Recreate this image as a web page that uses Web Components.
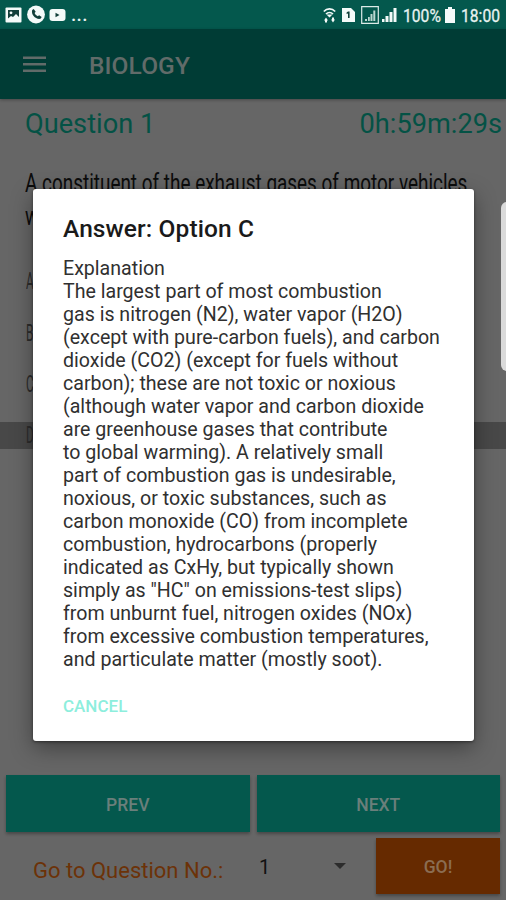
<!DOCTYPE html>
<html lang="en">
<head>
<meta charset="UTF-8">
<meta name="viewport" content="width=device-width, initial-scale=1.0">
<title>Biology Quiz</title>
<style>
  html, body { margin: 0; height: 100%; overflow: hidden; }
  body { font-family: Roboto, "Liberation Sans", sans-serif; background: #666; }
</style>
</head>
<body>
<quiz-app></quiz-app>

<script>
class StatusBar extends HTMLElement {
  connectedCallback() {
    this.attachShadow({ mode: 'open' });
    this.shadowRoot.innerHTML = `
      <style>
        :host {
          display: flex;
          justify-content: space-between;
          align-items: center;
          box-sizing: border-box;
          height: 29px;
          padding: 0 7px 0 5px;
          background: #04584d;
          color: #e9f3f1;
          font-size: 18px;
        }
        .group { display: flex; align-items: center; }
        svg { display: block; flex: none; fill: #f4faf9; }
        .dots { font-size: 19px; line-height: 20px; letter-spacing: 0.3px; margin-left: 5px; font-weight: 500; }
        .text { display: block; white-space: nowrap; line-height: 20px; padding-top: 2px; transform-origin: 0 50%; transform: scaleX(0.87); -webkit-text-stroke: 0.3px; }
      </style>
      <div class="group">
        <svg width="17" height="18" viewBox="0 0 17 18"><rect x=".5" y="1.500" width="16" height="15" rx="1"/><path fill="#123f3a" d="M3 4h11v7l-3-3-3 3-2-1-3 2.500z"/><circle cx="6" cy="6.800" r="1.400"/></svg>
        <svg width="18" height="19" viewBox="0 0 18 19" style="margin-left:5px"><circle cx="9" cy="9.500" r="8.900"/><path fill="#123f3a" d="M5.200 5l1.500-1 2 2.800-1.100 1.300c.6 1.500 1.700 2.500 3.200 3.200l1.300-1.100 2.600 1.900-1.200 1.700C8.700 14.800 3.800 9.500 5.200 5z"/></svg>
        <svg width="17" height="14" viewBox="0 0 17 14" style="margin-left:4px"><rect x=".5" y="1" width="16" height="12" rx="3"/><path fill="#123f3a" d="M6.500 4.800v4.400l4-2.200z"/></svg>
        <span class="dots">...</span>
      </div>
      <div class="group">
        <svg width="13" height="18" viewBox="0 0 13 18"><g fill="none" stroke="#f4faf9" stroke-width="1.700"><path d="M.8 5.500C4 2 9 2 12.200 5.500M3 8c2-2 5-2 7 0"/></g><path d="M6.500 11.500L3.500 8.500h6zM3 11.500l2 3H4v2H2v-2H1zM10 16.500l-2-3h1v-2h2v2h1z"/></svg>
        <svg width="13" height="16" viewBox="0 0 13 16" style="margin-left:6px"><path d="M0 1h9l4 4v10H0z"/><path fill="#123f3a" d="M6 4.500h1.600V11H6V6.500l-1.400.6V5.600z"/></svg>
        <svg width="18" height="18" viewBox="0 0 18 18" style="margin-left:6px"><path fill="none" stroke="#dcebe8" stroke-width="1.200" d="M.7.700h16.600v16.600H.7z"/><path fill="#bcd6d1" d="M4 13h2v2H4zM7 11h1.800v4H7zM9.500 8h2v7h-2zM12.300 4.500h2V15h-2z"/></svg>
        <svg width="15" height="16" viewBox="0 0 15 16" style="margin-left:3px"><path d="M0 12h2.500v3H0zM3.500 9H6.500v6H3.500zM7.500 5h3v10h-3zM11.500 1h3v14h-3z"/></svg>
        <span class="text" style="margin-left:6px;width:38px">100%</span>
        <svg width="10" height="16" viewBox="0 0 10 16" style="margin-left:4px"><path d="M3 0h4v2h3v14H0V2h3z"/></svg>
        <span class="text" style="margin-left:6px;width:38px">18:00</span>
      </div>
    `;
  }
}

class AppToolbar extends HTMLElement {
  connectedCallback() {
    this.attachShadow({ mode: 'open' });
    this.shadowRoot.innerHTML = `
      <style>
        :host {
          display: flex;
          align-items: center;
          box-sizing: border-box;
          height: 70px;
          padding: 2px 23px 0;
          gap: 43px;
          background: #003c35;
          color: #616b69;
          font-size: 24.500px;
          letter-spacing: 0.1px;
          font-weight: 500;
          box-shadow: 0 1px 3px rgba(0,0,0,0.3);
        }
        svg { display: block; }
      </style>
      <svg width="23" height="18" viewBox="0 0 23 18" fill="#616b69"><path d="M0 .5h23v2.600H0zM0 7h23v2.600H0zM0 13.500h23v2.600H0z"/></svg>
      <slot></slot>
    `;
  }
}

class QuizQuestion extends HTMLElement {
  connectedCallback() {
    this.attachShadow({ mode: 'open' });
    this.shadowRoot.innerHTML = `
      <style>
        :host { display: block; }
        .head {
          display: flex;
          justify-content: space-between;
          padding: 9px 4px 0 25px;
          font-size: 27.200px;
          line-height: 33px;
          color: #045245;
        }
        .narrow {
          display: block;
          transform: scaleX(0.757);
          transform-origin: 0 0;
          white-space: nowrap;
          color: #0c0c0c;
        }
        .question {
          margin: 26px 0 0 25px;
          font-size: 25px;
          line-height: 33px;
          width: 700px;
        }
        .options { margin-top: 23px; }
        .option {
          box-sizing: border-box;
          height: 51.500px;
          padding: 12px 0 0 26px;
          font-size: 24px;
          line-height: 27px;
        }
        .option .narrow { color: #2c2c2c; transform: scaleX(0.5); }
        .option.last { height: 27px; margin-top: 11px; padding-top: 0; background: #484848; }
      </style>
      <div class="head"><slot name="number"></slot><slot name="timer"></slot></div>
      <div class="narrow question"><slot></slot></div>
      <div class="options">
        <div class="option"><span class="narrow">A</span></div>
        <div class="option"><span class="narrow">B</span></div>
        <div class="option"><span class="narrow">C</span></div>
        <div class="option last"><span class="narrow">D</span></div>
      </div>
    `;
  }
}

class QuizButton extends HTMLElement {
  connectedCallback() {
    this.attachShadow({ mode: 'open' });
    this.shadowRoot.innerHTML = `
      <style>
        :host {
          display: flex;
          align-items: center;
          justify-content: center;
          box-sizing: border-box;
          height: 57px;
          padding-top: 2px;
          background: var(--fill, #04584d);
          color: var(--ink, #6a7f7b);
          font-size: 17.500px;
          font-weight: 500;
          box-shadow: 0 2px 3px rgba(0,0,0,0.3);
          cursor: pointer;
        }
      </style>
      <slot></slot>
    `;
  }
}

class QuizFooter extends HTMLElement {
  connectedCallback() {
    this.attachShadow({ mode: 'open' });
    this.shadowRoot.innerHTML = `
      <style>
        :host { display: flex; flex-direction: column; gap: 6px; padding: 0 6px 6px; }
        .nav { display: flex; gap: 7px; }
        .nav quiz-button { flex: 1; }
        .jump { display: flex; height: 56px; }
        .label { box-sizing: border-box; width: 253px; padding-left: 27px; font-size: 22px; line-height: 66px; color: #6c3208; white-space: nowrap; }
        .select { display: flex; align-items: center; justify-content: space-between; width: 87px; padding-right: 30px; font-size: 20px; color: #111; }
        .select span { padding-top: 2px; }
        .go { flex: 1; height: 56px; --fill: #662a00; --ink: #8b6d52; }
      </style>
      <div class="nav">
        <quiz-button>PREV</quiz-button>
        <quiz-button>NEXT</quiz-button>
      </div>
      <div class="jump">
        <div class="label">Go to Question No.:</div>
        <div class="select"><span>1</span><svg width="12" height="6" viewBox="0 0 12 6" fill="#2c2c2c"><path d="M0 0h12L6 6z"/></svg></div>
        <quiz-button class="go">GO!</quiz-button>
      </div>
    `;
  }
}

class AnswerDialog extends HTMLElement {
  connectedCallback() {
    this.attachShadow({ mode: 'open' });
    this.shadowRoot.innerHTML = `
      <style>
        :host {
          display: block;
          position: absolute;
          left: 33px; top: 189px;
          width: 441px; height: 552px;
          box-sizing: border-box;
          padding: 24px 0 0 30px;
          background: #fff;
          border-radius: 3px;
          box-shadow: 0 7px 22px rgba(0,0,0,0.38), 0 1px 3px rgba(0,0,0,0.45);
        }
        h2 { margin: 0; font-size: 24.500px; line-height: 32px; font-weight: 500; letter-spacing: 0.1px; color: #1a1a1a; }
        .body { margin-top: 12px; font-size: 19.600px; line-height: 22.980px; color: #303030; white-space: pre; }
        .action { margin-top: 23px; font-size: 17px; line-height: 24px; font-weight: 500; color: #8deedd; cursor: pointer; }
      </style>
      <h2><slot name="title"></slot></h2>
      <div class="body"><slot></slot></div>
      <div class="action">CANCEL</div>
    `;
  }
}

class QuizApp extends HTMLElement {
  connectedCallback() {
    this.attachShadow({ mode: 'open' });
    this.shadowRoot.innerHTML = `
      <style>
        :host {
          display: flex;
          flex-direction: column;
          position: relative;
          width: 506px; height: 900px;
          overflow: hidden;
          background: #666;
        }
        quiz-question { flex: 1; }
        /* edge panel handle, sits over the dimmed screen */
        .handle {
          position: absolute;
          left: 501px; top: 202px;
          width: 12px; height: 169px;
          border-radius: 6px;
          background: #dadada;
        }
      </style>
      <status-bar></status-bar>
      <app-toolbar>BIOLOGY</app-toolbar>
      <quiz-question>
        <span slot="number">Question 1</span>
        <span slot="timer">0h:59m:29s</span>A constituent of the exhaust gases of motor vehicles<br>w</quiz-question>
      <quiz-footer></quiz-footer>
      <answer-dialog><span slot="title">Answer: Option C</span>Explanation
The largest part of most combustion
gas is nitrogen (N2), water vapor (H2O)
(except with pure-carbon fuels), and carbon
dioxide (CO2) (except for fuels without
carbon); these are not toxic or noxious
(although water vapor and carbon dioxide
are greenhouse gases that contribute
to global warming). A relatively small
part of combustion gas is undesirable,
noxious, or toxic substances, such as
carbon monoxide (CO) from incomplete
combustion, hydrocarbons (properly
indicated as CxHy, but typically shown
simply as "HC" on emissions-test slips)
from unburnt fuel, nitrogen oxides (NOx)
from excessive combustion temperatures,
and particulate matter (mostly soot).</answer-dialog>
      <div class="handle"></div>
    `;
  }
}

customElements.define('status-bar', StatusBar);
customElements.define('app-toolbar', AppToolbar);
customElements.define('quiz-question', QuizQuestion);
customElements.define('quiz-button', QuizButton);
customElements.define('quiz-footer', QuizFooter);
customElements.define('answer-dialog', AnswerDialog);
customElements.define('quiz-app', QuizApp);
</script>
</body>
</html>
